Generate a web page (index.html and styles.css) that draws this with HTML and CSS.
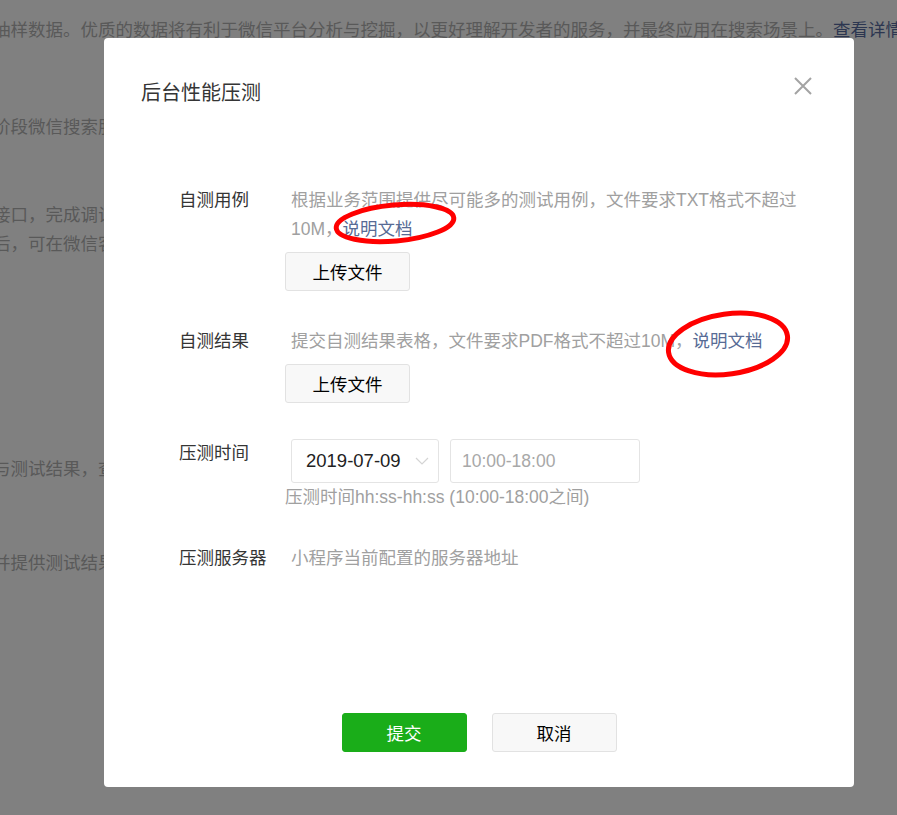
FILE: index.html
```html
<!DOCTYPE html>
<html lang="zh-CN">
<head>
<meta charset="UTF-8">
<title>后台性能压测</title>
<link rel="stylesheet" href="styles.css">
</head>
<body>
<div class="page">
    <p class="p1">抽样数据。优质的数据将有利于微信平台分析与挖掘，以更好理解开发者的服务，并最终应用在搜索场景上。<a>查看详情</a></p>
    <p class="p2">阶段微信搜索服务接入后会对该服务进行评估</p>
    <p class="p3">接口，完成调试后提交审核<br>后，可在微信客户端中搜索</p>
    <p class="p4">与测试结果，查看相关说明</p>
    <p class="p5">并提供测试结果以供审核</p>
</div>

<div class="dialog">
    <div class="dialog-head">
        <div class="dialog-title">后台性能压测</div>
        <span class="close">
            <svg width="18" height="18" viewBox="0 0 18 18"><path d="M1 1 L17 17 M17 1 L1 17" stroke="#a3a3a3" stroke-width="2" fill="none"/></svg>
        </span>
    </div>

    <div class="form">
        <div class="row">
            <div class="label">自测用例</div>
            <div class="value">
                <div class="desc">根据业务范围提供尽可能多的测试用例，文件要求TXT格式不超过10M，<a class="link">说明文档</a></div>
                <button class="btn upload">上传文件</button>
            </div>
        </div>
        <div class="row">
            <div class="label">自测结果</div>
            <div class="value">
                <div class="desc">提交自测结果表格，文件要求PDF格式不超过10M，<a class="link">说明文档</a></div>
                <button class="btn upload">上传文件</button>
            </div>
        </div>
        <div class="row row-time">
            <div class="label">压测时间</div>
            <div class="value">
                <div class="fields">
                    <div class="select">
                        <span>2019-07-09</span>
                        <svg width="14" height="8" viewBox="0 0 14 8"><path d="M1 1 L7 7 L13 1" stroke="#d4d4d4" stroke-width="1.2" fill="none"/></svg>
                    </div>
                    <div class="input">10:00-18:00</div>
                </div>
                <div class="hint">压测时间hh:ss-hh:ss (10:00-18:00之间)</div>
            </div>
        </div>
        <div class="row">
            <div class="label">压测服务器</div>
            <div class="value">
                <div class="desc">小程序当前配置的服务器地址</div>
            </div>
        </div>
    </div>

    <div class="dialog-foot">
        <button class="btn primary">提交</button>
        <button class="btn">取消</button>
    </div>
</div>

<svg class="marks" width="897" height="815" viewBox="0 0 897 815">
    <ellipse cx="395" cy="223" rx="59" ry="18" transform="rotate(-5 395 223)" stroke="#f00" stroke-width="5" fill="none"/>
    <ellipse cx="728" cy="344" rx="60" ry="30" transform="rotate(-8 728 344)" stroke="#f00" stroke-width="5" fill="none"/>
</svg>
</body>
</html>
```

FILE: styles.css
```css
body {
    margin: 0;
    height: 815px;
    overflow: hidden;
    background: #808080;
    font-family: "Liberation Sans", "Noto Sans CJK SC", sans-serif;
    font-size: 17.5px;
}

.page {
    margin-left: -7px;
    padding-top: 16px;
    color: #595959;
    line-height: 29px;
    white-space: nowrap;
}

.page p {
    margin: 0;
}

.page a {
    color: #2c3650;
}

.page .p2 { margin-top: 68px; }
.page .p3 { margin-top: 59px; }
.page .p4 { margin-top: 196px; }
.page .p5 { margin-top: 65px; }

.dialog {
    position: absolute;
    left: 104px;
    top: 38px;
    width: 750px;
    height: 749px;
    box-sizing: border-box;
    background: #fff;
    border-radius: 4px;
    display: flex;
    flex-direction: column;
}

.dialog-head {
    display: flex;
    justify-content: space-between;
    padding: 41px 42px 0 37px;
}

.dialog-title {
    font-size: 20px;
    line-height: 28px;
    color: #353535;
}

.close {
    margin-top: -2px;
}

.form {
    margin-top: 79px;
    padding-left: 75px;
}

.row {
    display: flex;
    margin-bottom: 36px;
}

.row-time {
    margin-bottom: 32px;
}

.label {
    width: 112px;
    flex-shrink: 0;
    color: #353535;
    line-height: 29px;
}

.value {
    width: 518px;
}

.desc {
    color: #a0a0a0;
    line-height: 29px;
}

.link {
    color: #576b95;
}

.btn {
    width: 125px;
    height: 39px;
    border: 1px solid #e2e2e2;
    border-radius: 3px;
    background: #f8f8f8;
    color: #000;
    font-family: inherit;
    font-size: 17.5px;
    padding: 0;
}

.upload {
    display: block;
    margin: 8px 0 0 -6px;
}

.fields {
    display: flex;
    gap: 11px;
}

.select,
.input {
    box-sizing: border-box;
    height: 44px;
    border: 1px solid #e4e4e4;
    border-radius: 3px;
    display: flex;
    align-items: center;
}

.select {
    width: 148px;
    padding: 0 9px 0 14px;
    justify-content: space-between;
    color: #222;
    font-size: 18.5px;
}

.input {
    width: 190px;
    padding-left: 11px;
    color: #a8a8a8;
    font-size: 17.5px;
}

.hint {
    margin-left: -6px;
    color: #a0a0a0;
    line-height: 29px;
}

.dialog-foot {
    margin-top: auto;
    padding-bottom: 35px;
    display: flex;
    justify-content: center;
    gap: 25px;
}

.primary {
    background: #1aad19;
    border-color: #1aad19;
    color: #fff;
}

.marks {
    position: absolute;
    left: 0;
    top: 0;
    pointer-events: none;
}
```
